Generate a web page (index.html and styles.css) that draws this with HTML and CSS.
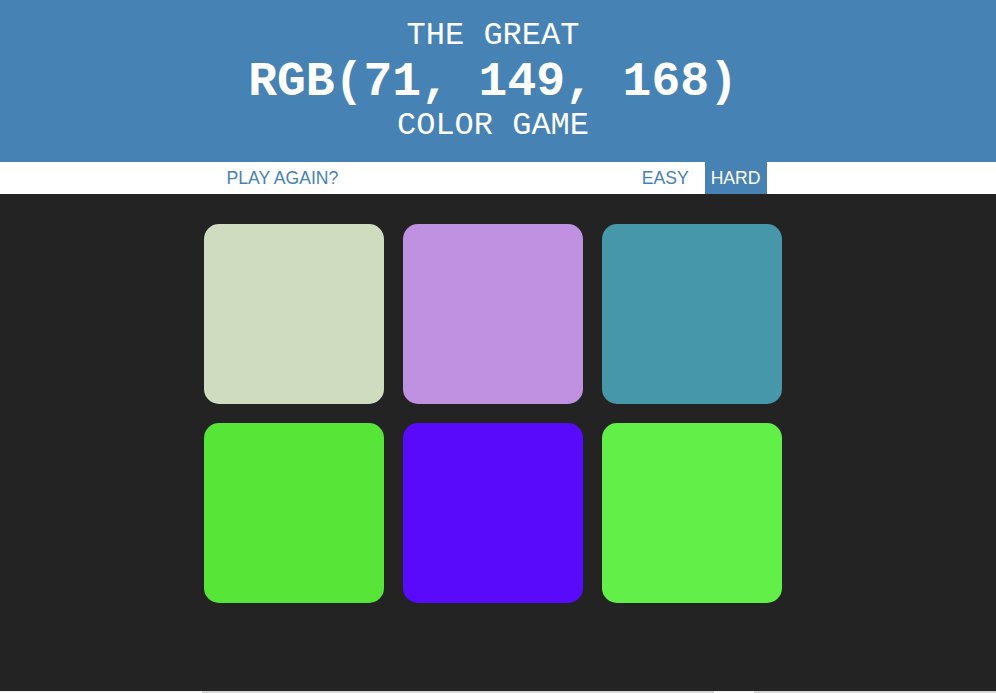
FILE: index.html
```html
<!DOCTYPE html>
<html lang="en">
<head>
<meta charset="utf-8">
<title>Color Game</title>
<link rel="stylesheet" href="styles.css">
</head>
<body>
<header class="header">
  <h1 class="title">
    <span class="title-line">The Great</span>
    <span class="title-rgb">RGB(71, 149, 168)</span>
    <span class="title-line title-last">Color Game</span>
  </h1>
</header>
<nav class="stripe">
  <div class="stripe-inner">
    <button class="btn reset">Play Again?</button>
    <span class="msg"></span>
    <div class="modes">
      <button class="btn mode">Easy</button>
      <button class="btn mode selected">Hard</button>
    </div>
  </div>
</nav>
<main class="board">
  <div class="grid">
    <div class="square sq1"></div>
    <div class="square sq2"></div>
    <div class="square sq3"></div>
    <div class="square sq4"></div>
    <div class="square sq5"></div>
    <div class="square sq6"></div>
  </div>
</main>
<div class="edge">
  <span class="edge-w1"></span>
  <span class="edge-g1"></span>
  <span class="edge-w2"></span>
  <span class="edge-g2"></span>
</div>
</body>
</html>
```
FILE: styles.css
```css
html, body {
  margin: 0;
  padding: 0;
  background: #232323;
  height: 693px;
  overflow: hidden;
}
body {
  font-family: "Liberation Sans", Arial, sans-serif;
}
.header {
  background: #4682b4;
  height: 162px;
  box-sizing: border-box;
  padding: 16px 10px 0 0;
  color: #ffffff;
}
.title {
  margin: 0;
  font-family: "Liberation Mono", "Courier New", monospace;
  font-weight: normal;
  text-align: center;
  text-transform: uppercase;
  display: flex;
  flex-direction: column;
  align-items: center;
}
.title-line {
  font-size: 32px;
  line-height: 40px;
}
.title-rgb {
  font-size: 48px;
  line-height: 53px;
  font-weight: bold;
}
.title-last {
  line-height: 34px;
}
.stripe {
  background: #ffffff;
  height: 32px;
  padding-right: 10px;
}
.stripe-inner {
  width: 547px;
  height: 32px;
  margin: 0 auto;
  display: flex;
  align-items: stretch;
}
.msg {
  flex: 1;
}
.modes {
  display: flex;
  gap: 10px;
}
.btn {
  border: none;
  background: none;
  margin: 0;
  padding: 0 6px;
  height: 32px;
  font-family: "Liberation Sans", Arial, sans-serif;
  font-size: 17.6px;
  color: #4682b4;
  text-transform: uppercase;
  cursor: pointer;
}
.reset {
  padding-left: 7px;
}
.selected {
  background: #4682b4;
  color: #ffffff;
}
.board {
  height: 497px;
  box-sizing: border-box;
  padding: 30px 10px 0 0;
}
.grid {
  width: 578px;
  margin: 0 auto;
  display: grid;
  grid-template-columns: repeat(3, 180px);
  grid-auto-rows: 180px;
  gap: 19px;
}
.square {
  border-radius: 15px;
}
.sq1 { background: #cfdcbf; }
.sq2 { background: #c091e0; }
.sq3 { background: #4797ab; }
.sq4 { background: #57e538; }
.sq5 { background: #5a0afb; }
.sq6 { background: #62ef47; }
.edge {
  display: flex;
  height: 2px;
}
.edge span { display: block; height: 2px; }
.edge-w1 { width: 202px; background: #f4f4f4; }
.edge-g1 { width: 512px; background: #d6d6d6; }
.edge-w2 { width: 40px; background: #f4f4f4; }
.edge-g2 { flex: 1; background: #d6d6d6; }
```
